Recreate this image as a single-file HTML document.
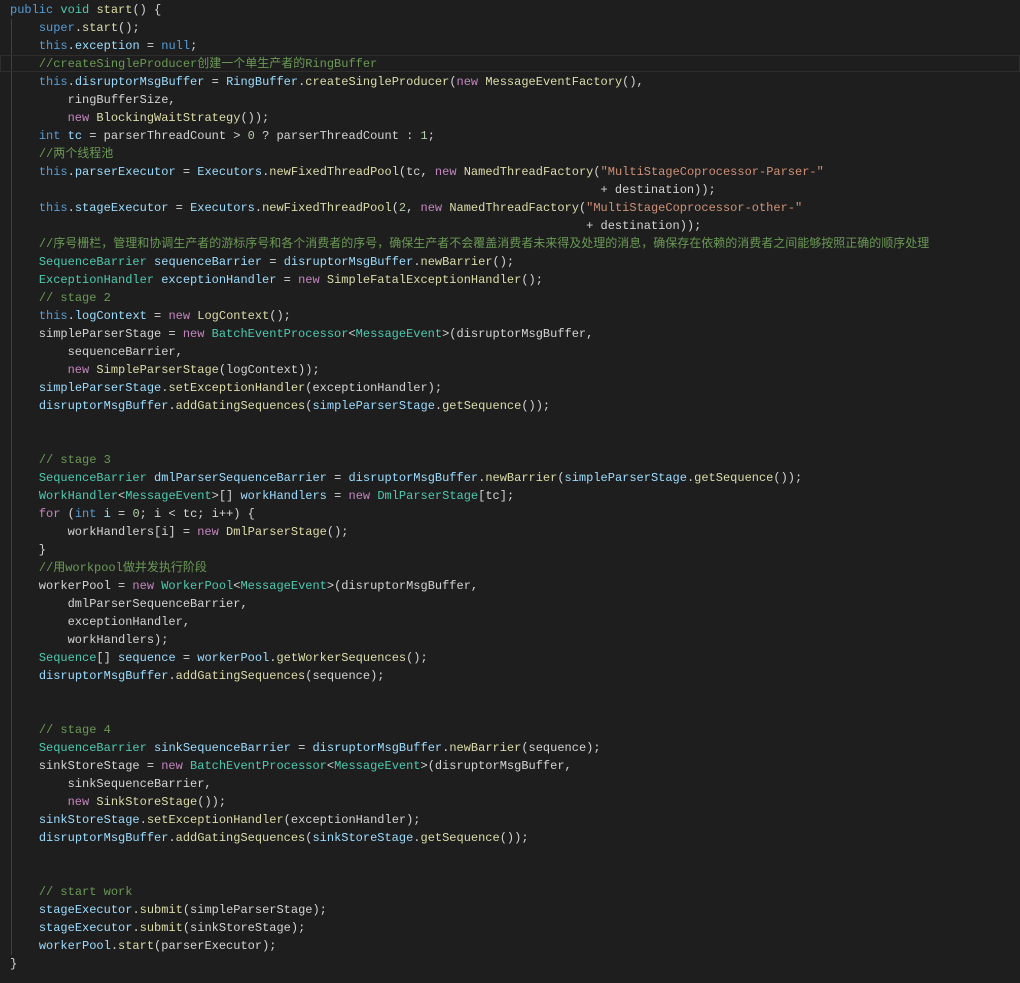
<!DOCTYPE html>
<html><head><meta charset="utf-8"><style>
html,body{margin:0;padding:0;background:#1e1e1e;width:1020px;height:983px;overflow:hidden}
pre{margin:0;padding:1px 0 0 10px;font-family:"Liberation Mono","Noto Sans CJK SC",monospace;font-size:12px;line-height:18px;color:#d4d4d4;position:relative;z-index:1}
.k{color:#569cd6}.t{color:#4ec9b0}.f{color:#dcdcaa}.v{color:#9cdcfe}.n{color:#c586c0}.s{color:#ce9178}.c{color:#6a9955}.d{color:#b5cea8}
.g{position:absolute;left:11px;top:19px;width:1px;height:936px;background:#404040}
.hl{position:absolute;left:0;top:55px;width:1020px;height:17px;border:1px solid #2e2e2e;box-sizing:border-box}
</style></head><body>
<div class="g"></div><div class="hl"></div>
<pre><span class="k">public</span> <span class="t">void</span> <span class="f">start</span>() {
    <span class="k">super</span>.<span class="f">start</span>();
    <span class="k">this</span>.<span class="v">exception</span> = <span class="k">null</span>;
    <span class="c">//createSingleProducer创建一个单生产者的RingBuffer</span>
    <span class="k">this</span>.<span class="v">disruptorMsgBuffer</span> = <span class="v">RingBuffer</span>.<span class="f">createSingleProducer</span>(<span class="n">new</span> <span class="f">MessageEventFactory</span>(),
        ringBufferSize,
        <span class="n">new</span> <span class="f">BlockingWaitStrategy</span>());
    <span class="k">int</span> <span class="v">tc</span> = parserThreadCount &gt; <span class="d">0</span> ? parserThreadCount : <span class="d">1</span>;
    <span class="c">//两个线程池</span>
    <span class="k">this</span>.<span class="v">parserExecutor</span> = <span class="v">Executors</span>.<span class="f">newFixedThreadPool</span>(tc, <span class="n">new</span> <span class="f">NamedThreadFactory</span>(<span class="s">"MultiStageCoprocessor-Parser-"</span>
                                                                                  + destination));
    <span class="k">this</span>.<span class="v">stageExecutor</span> = <span class="v">Executors</span>.<span class="f">newFixedThreadPool</span>(<span class="d">2</span>, <span class="n">new</span> <span class="f">NamedThreadFactory</span>(<span class="s">"MultiStageCoprocessor-other-"</span>
                                                                                + destination));
    <span class="c">//序号栅栏，管理和协调生产者的游标序号和各个消费者的序号，确保生产者不会覆盖消费者未来得及处理的消息，确保存在依赖的消费者之间能够按照正确的顺序处理</span>
    <span class="t">SequenceBarrier</span> <span class="v">sequenceBarrier</span> = <span class="v">disruptorMsgBuffer</span>.<span class="f">newBarrier</span>();
    <span class="t">ExceptionHandler</span> <span class="v">exceptionHandler</span> = <span class="n">new</span> <span class="f">SimpleFatalExceptionHandler</span>();
    <span class="c">// stage 2</span>
    <span class="k">this</span>.<span class="v">logContext</span> = <span class="n">new</span> <span class="f">LogContext</span>();
    simpleParserStage = <span class="n">new</span> <span class="t">BatchEventProcessor</span>&lt;<span class="t">MessageEvent</span>&gt;(disruptorMsgBuffer,
        sequenceBarrier,
        <span class="n">new</span> <span class="f">SimpleParserStage</span>(logContext));
    <span class="v">simpleParserStage</span>.<span class="f">setExceptionHandler</span>(exceptionHandler);
    <span class="v">disruptorMsgBuffer</span>.<span class="f">addGatingSequences</span>(<span class="v">simpleParserStage</span>.<span class="f">getSequence</span>());


    <span class="c">// stage 3</span>
    <span class="t">SequenceBarrier</span> <span class="v">dmlParserSequenceBarrier</span> = <span class="v">disruptorMsgBuffer</span>.<span class="f">newBarrier</span>(<span class="v">simpleParserStage</span>.<span class="f">getSequence</span>());
    <span class="t">WorkHandler</span>&lt;<span class="t">MessageEvent</span>&gt;[] <span class="v">workHandlers</span> = <span class="n">new</span> <span class="t">DmlParserStage</span>[tc];
    <span class="n">for</span> (<span class="k">int</span> <span class="v">i</span> = <span class="d">0</span>; i &lt; tc; i++) {
        workHandlers[i] = <span class="n">new</span> <span class="f">DmlParserStage</span>();
    }
    <span class="c">//用workpool做并发执行阶段</span>
    workerPool = <span class="n">new</span> <span class="t">WorkerPool</span>&lt;<span class="t">MessageEvent</span>&gt;(disruptorMsgBuffer,
        dmlParserSequenceBarrier,
        exceptionHandler,
        workHandlers);
    <span class="t">Sequence</span>[] <span class="v">sequence</span> = <span class="v">workerPool</span>.<span class="f">getWorkerSequences</span>();
    <span class="v">disruptorMsgBuffer</span>.<span class="f">addGatingSequences</span>(sequence);


    <span class="c">// stage 4</span>
    <span class="t">SequenceBarrier</span> <span class="v">sinkSequenceBarrier</span> = <span class="v">disruptorMsgBuffer</span>.<span class="f">newBarrier</span>(sequence);
    sinkStoreStage = <span class="n">new</span> <span class="t">BatchEventProcessor</span>&lt;<span class="t">MessageEvent</span>&gt;(disruptorMsgBuffer,
        sinkSequenceBarrier,
        <span class="n">new</span> <span class="f">SinkStoreStage</span>());
    <span class="v">sinkStoreStage</span>.<span class="f">setExceptionHandler</span>(exceptionHandler);
    <span class="v">disruptorMsgBuffer</span>.<span class="f">addGatingSequences</span>(<span class="v">sinkStoreStage</span>.<span class="f">getSequence</span>());


    <span class="c">// start work</span>
    <span class="v">stageExecutor</span>.<span class="f">submit</span>(simpleParserStage);
    <span class="v">stageExecutor</span>.<span class="f">submit</span>(sinkStoreStage);
    <span class="v">workerPool</span>.<span class="f">start</span>(parserExecutor);
}</pre>
</body></html>
